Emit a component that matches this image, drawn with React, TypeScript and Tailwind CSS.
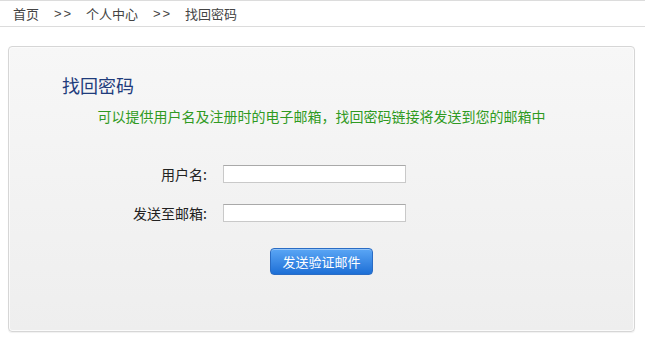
import React from "react";

const font = { fontFamily: '"Noto Sans CJK SC", "Liberation Sans", sans-serif' };

export default function App() {
  return (
    <div className="w-[645px] h-[340px] bg-white overflow-hidden" style={font}>
      <div className="h-[27px] border-t border-b border-[#dcdcdc] flex items-center pl-[13px] gap-[15px] text-[13px] leading-none text-[#444]">
        <span>首页</span>
        <span className="w-[17px] tracking-[2px]" style={{ fontFamily: '"Liberation Sans", sans-serif' }}>&gt;&gt;</span>
        <span>个人中心</span>
        <span className="w-[17px] tracking-[2px]" style={{ fontFamily: '"Liberation Sans", sans-serif' }}>&gt;&gt;</span>
        <span>找回密码</span>
      </div>
      <div className="ml-[8px] mt-[19px] w-[627px] h-[286px] rounded-[4px] border border-[#d6d6d6] bg-gradient-to-b from-[#f7f7f7] to-[#eeeeee] shadow-[inset_0_0_0_1px_#fbfbfb,0_1px_1px_rgba(0,0,0,0.06)] flex flex-col">
        <div className="pl-[53px] pt-[26px] text-[18px] leading-[24px] text-[#1f3c7c]">找回密码</div>
        <div className="mt-[9px] text-center text-[14px] leading-[20px] text-[#2f9a22]">
          可以提供用户名及注册时的电子邮箱，找回密码链接将发送到您的邮箱中
        </div>
        <div className="mt-[39px] flex flex-col gap-[21px]">
          <div className="flex items-center">
            <div className="w-[198px] text-right text-[14px] leading-[18px] text-[#222]">用户名:</div>
            <input className="ml-[16px] w-[183px] h-[18px] bg-white border border-[#c9c9c9] border-t-[#a9a9a9] outline-none" />
          </div>
          <div className="flex items-center">
            <div className="w-[198px] text-right text-[14px] leading-[18px] text-[#222]">发送至邮箱:</div>
            <input className="ml-[16px] w-[183px] h-[18px] bg-white border border-[#c9c9c9] border-t-[#a9a9a9] outline-none" />
          </div>
        </div>
        <div className="mt-[26px] pl-[261px]">
          <button className="w-[103px] h-[27px] rounded-[4px] border border-[#2a6cc4] bg-gradient-to-b from-[#5aa6f5] to-[#1c6fd6] text-white text-[13px] leading-none shadow-[inset_0_1px_0_rgba(255,255,255,0.35)]">
            发送验证邮件
          </button>
        </div>
      </div>
    </div>
  );
}
